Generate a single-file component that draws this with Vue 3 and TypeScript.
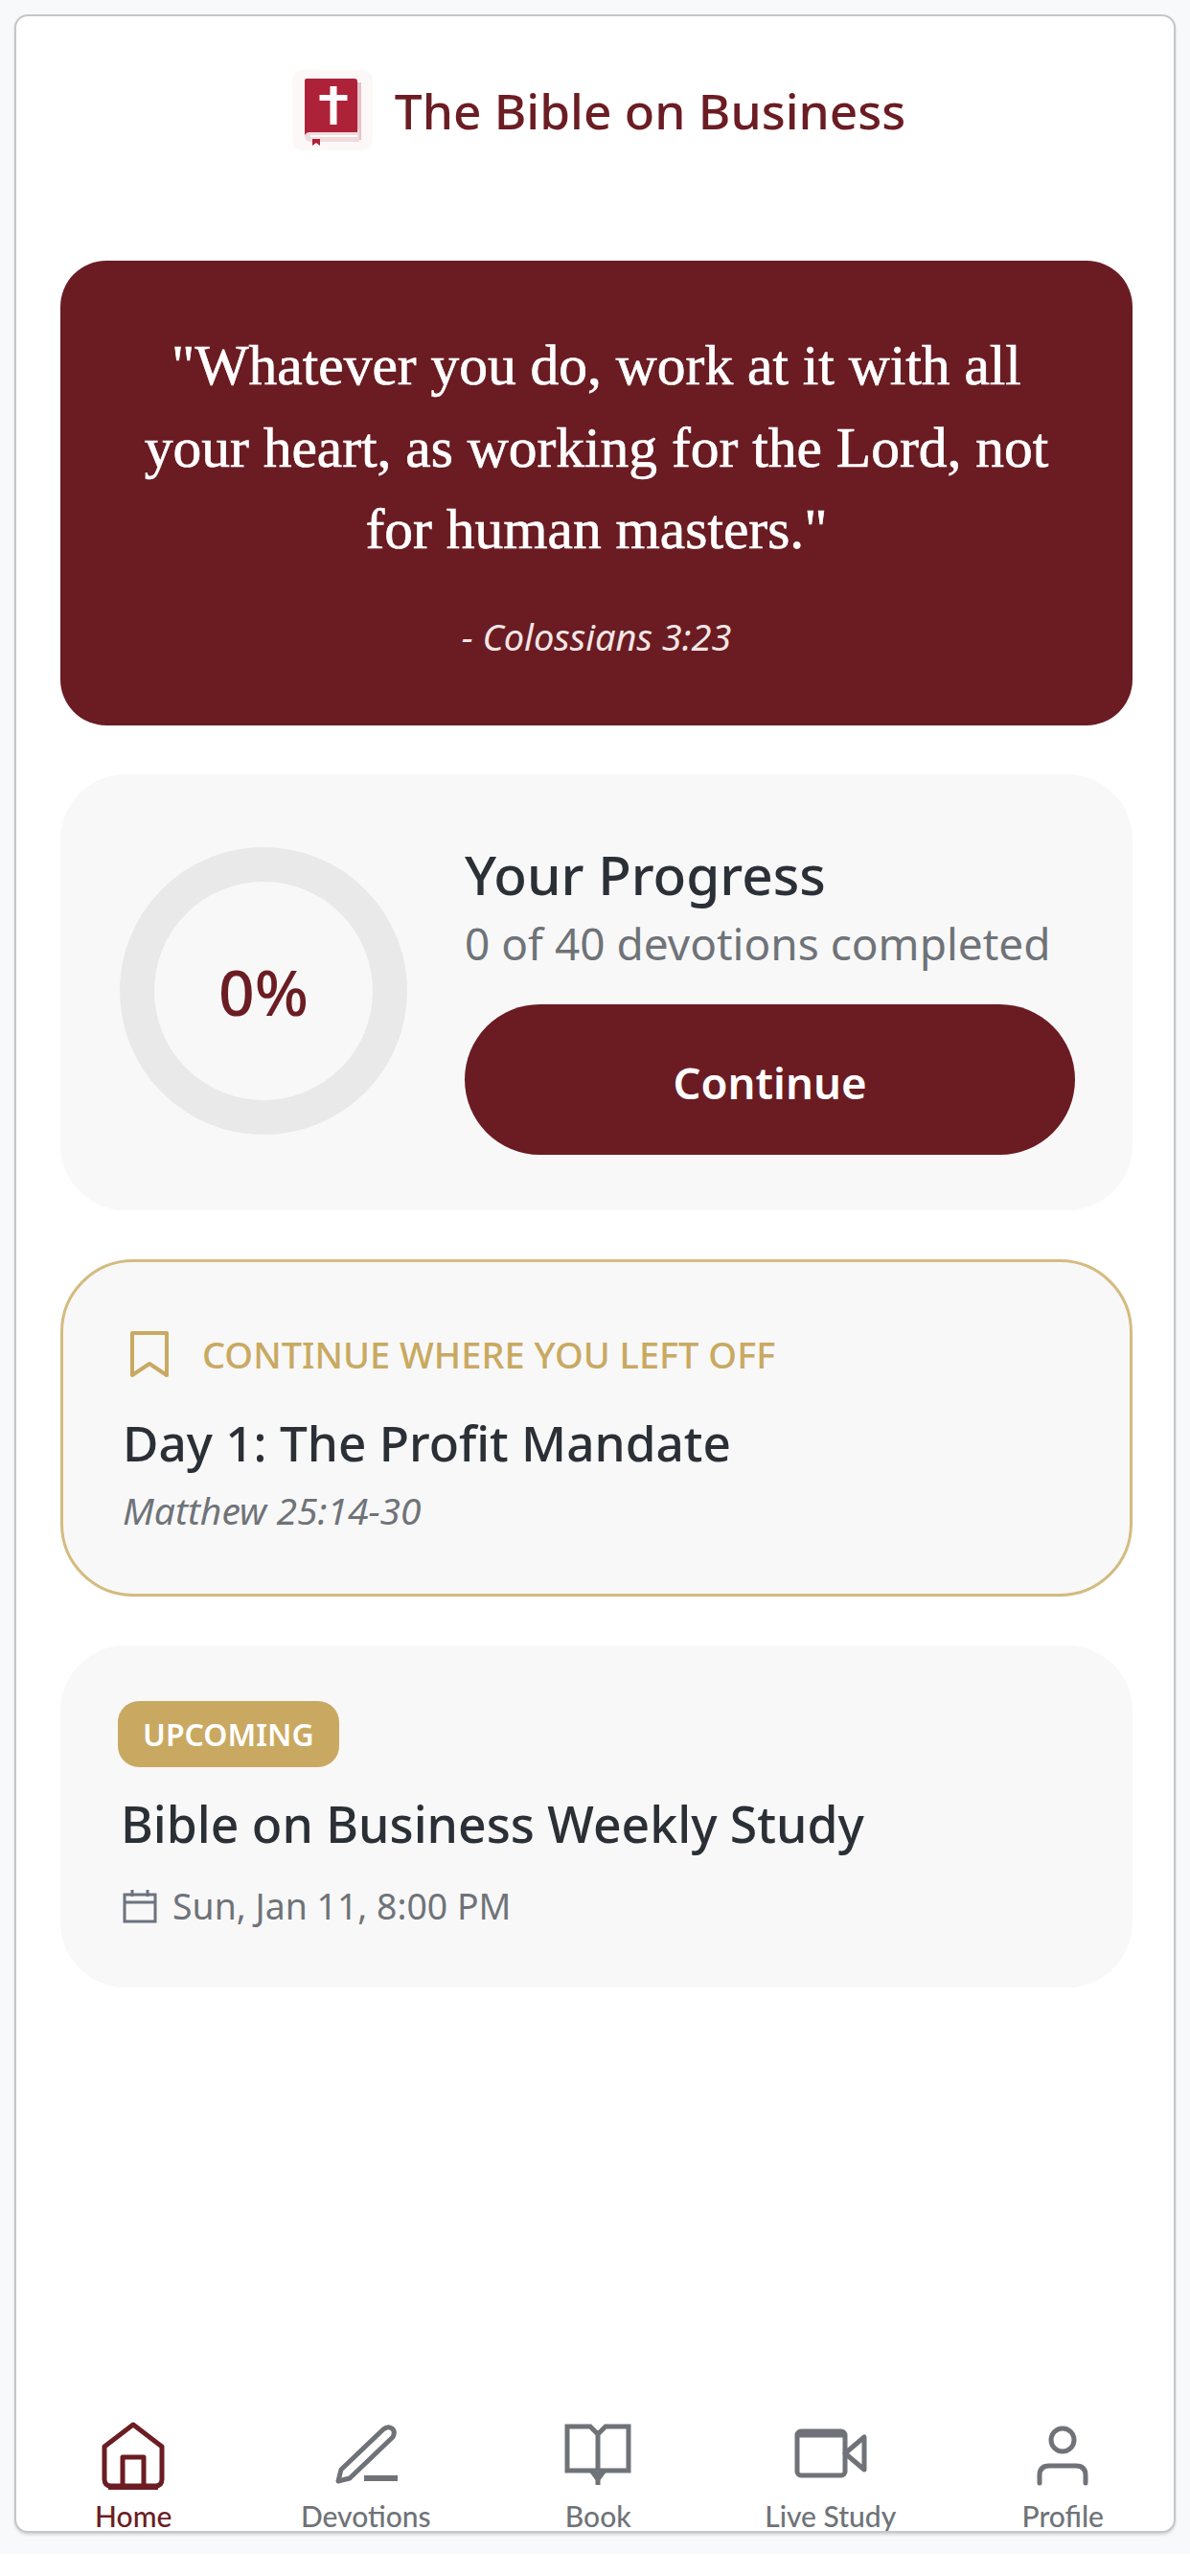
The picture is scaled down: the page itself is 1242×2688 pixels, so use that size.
<script setup lang="ts">
interface NavItem {
  label: string;
  active?: boolean;
}

const navItems: NavItem[] = [
  { label: "Home", active: true },
  { label: "Devotions" },
  { label: "Book" },
  { label: "Live Study" },
  { label: "Profile" },
];
</script>

<template>
  <div class="page">
    <div class="phone">
      <header class="header">
        <svg class="logo" viewBox="0 0 84 84" aria-hidden="true">
          <rect width="84" height="84" rx="10" fill="#fdf8f8" />
          <path d="M68 13h4v60h-4z" fill="#e3c3c8" />
          <path d="M13 68a6 6 0 0 1 6-6h51v13H19a6 6 0 0 1-6-6z" fill="#efdadd" />
          <path d="M19 69h49" stroke="#fff" stroke-width="2" />
          <path d="M15 9h50a3 3 0 0 1 3 3v53H19a6 6 0 0 0-6 3V11a2 2 0 0 1 2-2z" fill="#ad2238" />
          <path d="M21 72h8v7l-4-3-4 3z" fill="#ad2238" />
          <path d="M39.500 17h7v9h11v6h-11v25h-7V32h-11v-6h11z" fill="#fff" />
        </svg>
        <h1 class="brand">The Bible on Business</h1>
      </header>

      <main class="content">
        <section class="hero">
          <p class="verse">"Whatever you do, work at it with all your heart, as working for the Lord, not for human masters."</p>
          <p class="reference">- Colossians 3:23</p>
        </section>

        <section class="card progress">
          <div class="ring"><span>0%</span></div>
          <div class="progress-info">
            <h2 class="heading">Your Progress</h2>
            <p class="count">0 of 40 devotions completed</p>
            <button class="continue">Continue</button>
          </div>
        </section>

        <section class="card resume">
          <div class="resume-label">
            <svg class="bookmark" viewBox="0 0 44 52" aria-hidden="true">
              <path d="M4 4h36v44L22 36 4 48z" fill="none" stroke="#c9a961" stroke-width="4" stroke-linejoin="round" />
            </svg>
            <span>CONTINUE WHERE YOU LEFT OFF</span>
          </div>
          <h2 class="heading">Day 1: The Profit Mandate</h2>
          <p class="passage">Matthew 25:14-30</p>
        </section>

        <section class="card upcoming">
          <span class="badge">UPCOMING</span>
          <h2 class="heading">Bible on Business Weekly Study</h2>
          <div class="when">
            <svg class="calendar" viewBox="0 0 38 38" aria-hidden="true">
              <path d="M3 7h32v28H3zM3 15h32M11 2v7M27 2v7" fill="none" stroke="#6b7280" stroke-width="3" />
            </svg>
            <span>Sun, Jan 11, 8:00 PM</span>
          </div>
        </section>
      </main>

      <nav class="nav">
        <div v-for="item in navItems" :key="item.label" class="nav-item" :class="{ active: item.active }">
          <svg class="nav-icon" viewBox="0 0 80 80" aria-hidden="true">
            <g v-if="item.label === 'Home'" fill="none" stroke="currentColor" stroke-width="5" stroke-linejoin="round">
              <path d="M40 7 10 30v34q0 7 7 7h46q7 0 7-7V30z" />
              <path d="M29 71V41h22v30" />
              <path d="M14 72h52" stroke-width="6" />
            </g>
            <g v-else-if="item.label === 'Devotions'" fill="none" stroke="currentColor" stroke-width="5" stroke-linejoin="round">
              <path d="M58 12q5-4 9-1t1 9L23 63l-12 3 3-12z" />
              <path d="M38 63h35" stroke-width="6" />
            </g>
            <g v-else-if="item.label === 'Book'" fill="none" stroke="currentColor" stroke-width="5" stroke-linejoin="miter">
              <path d="M8 9h24l8 8 8-8h24v46H8z" />
              <path d="M40 17v53" />
              <path d="m34 56 6 8 6-8z" fill="currentColor" />
            </g>
            <g v-else-if="item.label === 'Live Study'" fill="none" stroke="currentColor" stroke-width="5" stroke-linejoin="round">
              <rect x="5" y="14" width="50" height="46" rx="4" />
              <path d="M7 17h46" stroke-width="7" />
              <path d="m55 37 20-17v34z" />
            </g>
            <g v-else fill="none" stroke="currentColor" stroke-width="5" stroke-linecap="round">
              <circle cx="40" cy="23" r="12" />
              <path d="M16 68v-8q0-10 10-10h28q10 0 10 10v8" />
            </g>
          </svg>
          <span class="nav-label">{{ item.label }}</span>
        </div>
      </nav>
    </div>
  </div>
</template>

<style scoped>
.page {
  box-sizing: border-box;
  height: 2665px;
  padding: 15px 15px 22px;
  background: #f8f9fa;
  font-family: "Noto Sans", "Open Sans", sans-serif;
}

.phone {
  box-sizing: border-box;
  display: flex;
  flex-direction: column;
  height: 100%;
  overflow: hidden;
  background: #fff;
  border: 2px solid #c4c7ca;
  border-radius: 14px;
  box-shadow: 0 2px 3px rgba(0, 0, 0, 0.15);
}

.header {
  display: flex;
  flex: none;
  align-items: center;
  justify-content: center;
  gap: 23px;
  box-sizing: border-box;
  height: 196px;
  padding-left: 8px;
}

.logo {
  width: 84px;
  height: 84px;
}

.brand {
  margin: 0;
  color: #6b1d23;
  font-size: 51.4px;
  font-weight: 500;
}

.content {
  display: flex;
  flex: 1;
  flex-direction: column;
  gap: 51px;
  padding: 59px 43px 0 46px;
}

.hero {
  box-sizing: border-box;
  height: 485px;
  padding: 67px 72px 0;
  color: #fff;
  text-align: center;
  background: #6a1c22;
  border-radius: 48px;
}

.verse {
  margin: 0;
  font-family: "Liberation Serif", serif;
  font-size: 59.5px;
  line-height: 85.5px;
  -webkit-text-stroke: 0.7px #fff;
}

.reference {
  margin: 42px 0 0;
  color: #f3e6e6;
  font-size: 38px;
  font-style: italic;
}

.card {
  box-sizing: border-box;
  background: #f8f8f8;
  border-radius: 68px;
}

.progress {
  display: flex;
  flex: none;
  align-items: center;
  gap: 60px;
  height: 455px;
  padding: 0 60px 0 62px;
}

.ring {
  display: flex;
  flex: none;
  align-items: center;
  justify-content: center;
  box-sizing: border-box;
  width: 300px;
  height: 300px;
  margin-top: -3px;
  color: #6b1d23;
  font-size: 66px;
  font-weight: 500;
  border: 36px solid #e9e9e9;
  border-radius: 50%;
}

.progress-info {
  flex: 1;
  margin-top: 7px;
}

.heading {
  margin: 0;
  color: #2b2f36;
  font-size: 56.7px;
  font-weight: 500;
}

.count {
  margin: 2px 0 0;
  color: #6f7378;
  font-size: 46px;
}

.continue {
  display: block;
  width: 100%;
  height: 157px;
  margin-top: 33px;
  padding-top: 5px;
  color: #fff;
  font-family: inherit;
  font-size: 45.5px;
  font-weight: 600;
  background: #6a1c22;
  border: none;
  border-radius: 80px;
}

.resume {
  flex: none;
  height: 352px;
  padding: 70px 62px 0;
  border: 3px solid #d4bb80;
  border-radius: 76px;
}

.resume-label {
  display: flex;
  align-items: center;
  gap: 33px;
  padding-left: 6px;
  color: #c9a961;
  font-size: 38px;
  font-weight: 500;
}

.bookmark {
  width: 44px;
  height: 52px;
}

.resume .heading {
  margin-top: 31px;
  font-size: 51.3px;
}

.passage {
  margin: 9px 0 0;
  color: #6f7378;
  font-size: 39px;
  font-style: italic;
}

.upcoming {
  display: flex;
  flex: none;
  flex-direction: column;
  align-items: flex-start;
  height: 357px;
  padding: 58px 60px 0;
}

.badge {
  padding: 13px 26px;
  color: #fff;
  font-size: 32px;
  font-weight: 600;
  background: #c9a961;
  border-radius: 22px;
}

.upcoming .heading {
  margin: 24px 0 0 3px;
  font-size: 51.7px;
}

.when {
  display: flex;
  align-items: center;
  gap: 15px;
  margin: 25px 0 0 4px;
  color: #6f7378;
  font-size: 37.4px;
}

.calendar {
  width: 38px;
  height: 38px;
}

.nav {
  display: grid;
  flex: none;
  grid-template-columns: repeat(5, 242.5px);
  height: 118px;
  padding-left: 1px;
}

.nav-item {
  display: flex;
  flex-direction: column;
  align-items: center;
  color: #6f7378;
}

.nav-item.active {
  color: #6b1d23;
}

.nav-icon {
  flex: none;
  width: 80px;
  height: 80px;
}

.nav-label {
  margin-top: 6px;
  font-family: "Lato", sans-serif;
  font-size: 30px;
  font-weight: 500;
  line-height: 32px;
}
</style>

<style>
html,
body {
  background: #fff;
}
</style>
